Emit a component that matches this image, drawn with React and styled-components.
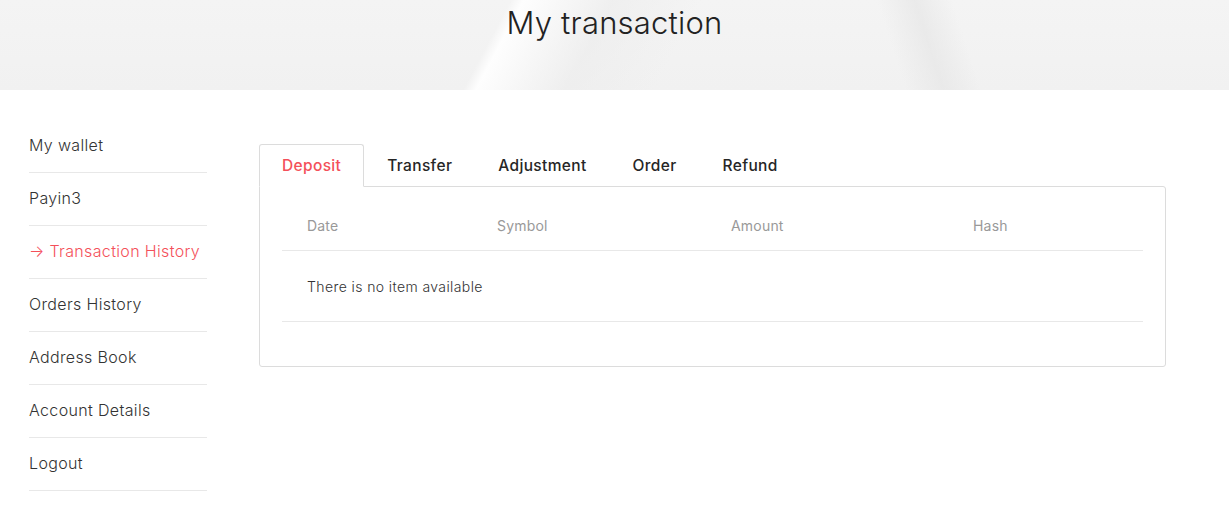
import React from 'react'
import styled, { createGlobalStyle } from 'styled-components'

const Global = createGlobalStyle`
  body {
    margin: 0;
    background: #fff;
    font-family: 'Inter', 'Open Sans', sans-serif;
    color: #333;
  }
`

const menu = ['My wallet', 'Payin3', 'Transaction History', 'Orders History', 'Address Book', 'Account Details', 'Logout']
const tabs = ['Deposit', 'Transfer', 'Adjustment', 'Order', 'Refund']
const columns = ['Date', 'Symbol', 'Amount', 'Hash']

const App = () => {
  return (
    <>
      <Global />
      <Banner>
        <Title>My transaction</Title>
      </Banner>
      <Page>
        <Sidebar>
          {menu.map((item) => (
            <MenuItem key={item} active={item === 'Transaction History'}>
              {item === 'Transaction History' ? '→ ' : ''}{item}
            </MenuItem>
          ))}
        </Sidebar>
        <Content>
          <Tabs>
            {tabs.map((t) => (
              <Tab key={t} active={t === 'Deposit'}>{t}</Tab>
            ))}
          </Tabs>
          <Panel>
            <HeadRow>
              {columns.map((c) => <HeadCell key={c}>{c}</HeadCell>)}
            </HeadRow>
            <EmptyRow>There is no item available</EmptyRow>
          </Panel>
        </Content>
      </Page>
    </>
  )
}

export default App

const Banner = styled.div`
  height: 90px;
  display: flex;
  justify-content: center;
  background:
    linear-gradient(118deg, transparent 0%, transparent 40%, rgba(255,255,255,0.9) 41%, rgba(236,236,236,0.6) 48%, transparent 55%),
    linear-gradient(72deg, transparent 72%, rgba(230,230,230,0.7) 75%, transparent 78%),
    linear-gradient(180deg, #f4f4f4 0%, #f1f1f1 100%);
  background-color: #f3f3f3;
`

const Title = styled.h1`
  margin: 5px 0 0;
  font-family: 'Inter', sans-serif;
  font-weight: 300;
  font-size: 31px;
  line-height: 36px;
  color: #222;
  letter-spacing: 0.2px;
`

const Page = styled.div`
  display: flex;
  padding: 30px 0 0 29px;
  gap: 52px;
`

const Sidebar = styled.ul`
  list-style: none;
  margin: 0;
  padding: 0;
  width: 178px;
  flex-shrink: 0;
`

const MenuItem = styled.li`
  box-sizing: border-box;
  height: 53px;
  padding-bottom: 2px;
  border-bottom: 1px solid #e8e8e8;
  display: flex;
  align-items: center;
  font-size: 16px;
  font-weight: 300;
  letter-spacing: 0.35px;
  color: ${(p) => (p.active ? '#f4505a' : '#333')};
  white-space: nowrap;
`

const Content = styled.div`
  margin-top: 24px;
  width: 907px;
`

const Tabs = styled.div`
  display: flex;
  position: relative;
  z-index: 1;
  margin-bottom: -1px;
`

const Tab = styled.div`
  height: 41px;
  padding: 0 22px;
  display: flex;
  align-items: center;
  font-size: 15.5px;
  font-weight: 500;
  letter-spacing: 0.35px;
  color: ${(p) => (p.active ? '#f4505a' : '#262626')};
  border: 1px solid ${(p) => (p.active ? '#dcdcdc' : 'transparent')};
  border-bottom-color: ${(p) => (p.active ? '#fff' : 'transparent')};
  border-radius: 3px 3px 0 0;
  background: ${(p) => (p.active ? '#fff' : 'transparent')};
`

const Panel = styled.div`
  border: 1px solid #dcdcdc;
  border-radius: 0 3px 3px 3px;
  padding: 13px 22px 44px;
`

const HeadRow = styled.div`
  display: grid;
  grid-template-columns: 190px 234px 242px 1fr;
  height: 50px;
  align-items: center;
  border-bottom: 1px solid #e8e8e8;
`

const HeadCell = styled.div`
  padding-left: 25px;
  font-size: 14px;
  letter-spacing: 0.2px;
  color: #999;
`

const EmptyRow = styled.div`
  height: 70px;
  display: flex;
  align-items: center;
  padding-left: 25px;
  font-size: 14px;
  font-weight: 300;
  letter-spacing: 0.4px;
  color: #333;
  border-bottom: 1px solid #e8e8e8;
`
